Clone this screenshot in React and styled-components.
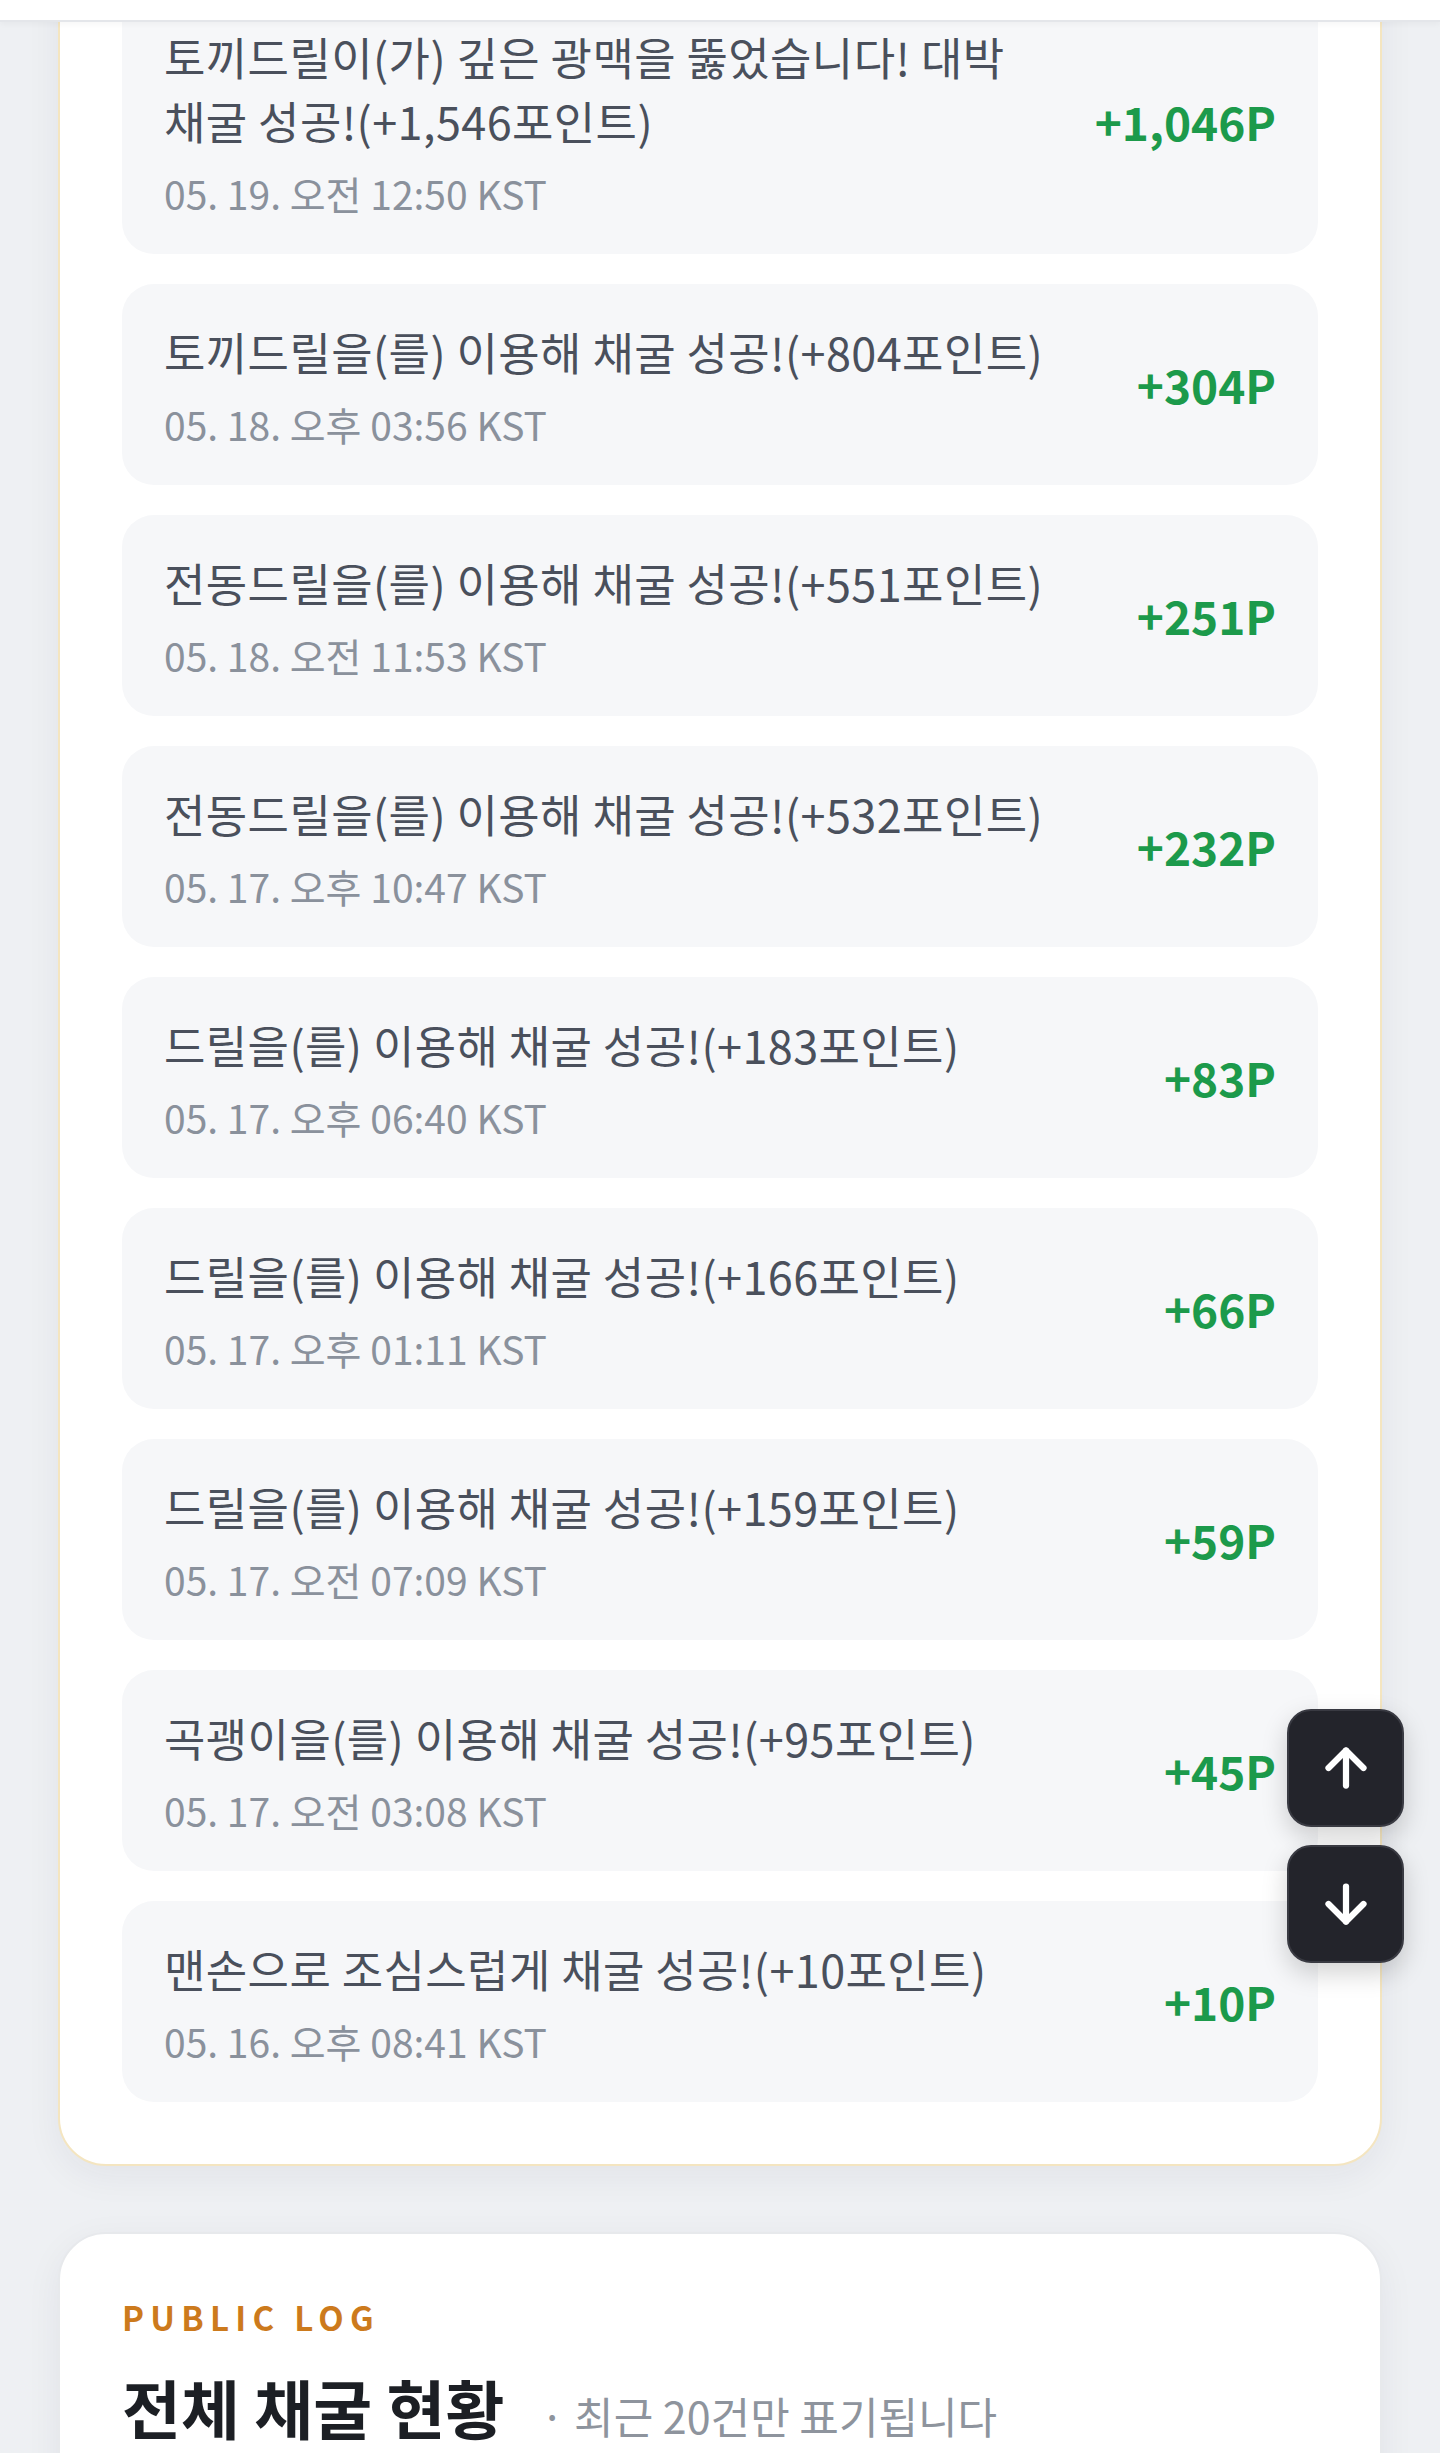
import React from "react";
import styled, { createGlobalStyle } from "styled-components";
import { ArrowUp, ArrowDown } from "lucide-react";

const GlobalStyle = createGlobalStyle`
  html, body {
    margin: 0;
    padding: 0;
    background: #eef0f3;
  }
  body {
    font-family: "Noto Sans CJK KR", "Noto Sans", sans-serif;
    color: #1f2329;
  }
  * {
    box-sizing: border-box;
  }
`;

const TopBar = styled.header`
  position: fixed;
  top: 0;
  left: 0;
  right: 0;
  height: 22px;
  background: #ffffff;
  border-bottom: 2px solid #e4e6ea;
  box-shadow: 0 2px 6px rgba(0, 0, 0, 0.04);
  z-index: 10;
`;

const Page = styled.main`
  padding: 0 58px 80px;
  min-height: 2453px;
`;

const Card = styled.section`
  background: #ffffff;
  border: 2px solid ${(p) => (p.$accent ? "#f4e5c0" : "#e7e9ec")};
  border-radius: 48px;
  padding: 62px;
  box-shadow: 0 10px 36px rgba(30, 40, 60, 0.06);
  margin-top: ${(p) => p.$offset || "0px"};
`;

const List = styled.ul`
  list-style: none;
  margin: 0;
  padding: 0;
  display: flex;
  flex-direction: column;
  gap: 30px;
`;

const Row = styled.li`
  display: flex;
  align-items: center;
  gap: 28px;
  background: #f6f7f9;
  border-radius: 32px;
  padding: 36px 42px 37px 42px;
`;

const Info = styled.div`
  flex: 1;
  min-width: 0;
`;

const Message = styled.div`
  font-size: 45px;
  line-height: 64px;
  letter-spacing: 0.4px;
  color: #4a505c;
  word-break: keep-all;
`;

const Time = styled.div`
  margin-top: 16px;
  font-size: 39px;
  line-height: 48px;
  color: #8a919c;
`;

const Amount = styled.div`
  flex-shrink: 0;
  font-size: 46px;
  font-weight: 700;
  color: #1c9a4b;
  white-space: nowrap;
`;

const Floating = styled.div`
  position: fixed;
  top: 1709px;
  right: 36px;
  display: flex;
  flex-direction: column;
  gap: 18px;
  z-index: 20;
`;

const FloatButton = styled.button`
  width: 117px;
  height: 118px;
  border-radius: 24px;
  border: 2px solid #393a42;
  background: #23242b;
  color: #ffffff;
  display: flex;
  align-items: center;
  justify-content: center;
  padding: 0;
  box-shadow: 0 10px 26px rgba(0, 0, 0, 0.18);
  cursor: pointer;
`;

const Eyebrow = styled.div`
  font-size: 33px;
  line-height: 46px;
  font-weight: 700;
  letter-spacing: 0.19em;
  color: #cc7a1c;
`;

const TitleRow = styled.div`
  display: flex;
  align-items: baseline;
  gap: 36px;
  margin-top: 28px;
`;

const Title = styled.h2`
  margin: 0;
  font-size: 64px;
  line-height: 76px;
  font-weight: 700;
  color: #1c1f24;
`;

const Note = styled.span`
  font-size: 43px;
  color: #8e949d;
`;

const PublicCard = styled(Card)`
  min-height: 420px;
  padding-top: 60px;
`;

const logs = [
  {
    msg: "토끼드릴이(가) 깊은 광맥을 뚫었습니다! 대박 채굴 성공!(+1,546포인트)",
    time: "05. 19. 오전 12:50 KST",
    amount: "+1,046P",
  },
  {
    msg: "토끼드릴을(를) 이용해 채굴 성공!(+804포인트)",
    time: "05. 18. 오후 03:56 KST",
    amount: "+304P",
  },
  {
    msg: "전동드릴을(를) 이용해 채굴 성공!(+551포인트)",
    time: "05. 18. 오전 11:53 KST",
    amount: "+251P",
  },
  {
    msg: "전동드릴을(를) 이용해 채굴 성공!(+532포인트)",
    time: "05. 17. 오후 10:47 KST",
    amount: "+232P",
  },
  {
    msg: "드릴을(를) 이용해 채굴 성공!(+183포인트)",
    time: "05. 17. 오후 06:40 KST",
    amount: "+83P",
  },
  {
    msg: "드릴을(를) 이용해 채굴 성공!(+166포인트)",
    time: "05. 17. 오후 01:11 KST",
    amount: "+66P",
  },
  {
    msg: "드릴을(를) 이용해 채굴 성공!(+159포인트)",
    time: "05. 17. 오전 07:09 KST",
    amount: "+59P",
  },
  {
    msg: "곡괭이을(를) 이용해 채굴 성공!(+95포인트)",
    time: "05. 17. 오전 03:08 KST",
    amount: "+45P",
  },
  {
    msg: "맨손으로 조심스럽게 채굴 성공!(+10포인트)",
    time: "05. 16. 오후 08:41 KST",
    amount: "+10P",
  },
];

function App() {
  return (
    <>
      <GlobalStyle />
      <TopBar />
      <Page>
        <Card $accent $offset="-75px">
          <List>
            {logs.map((log) => (
              <Row key={log.time}>
                <Info>
                  <Message>{log.msg}</Message>
                  <Time>{log.time}</Time>
                </Info>
                <Amount>{log.amount}</Amount>
              </Row>
            ))}
          </List>
        </Card>
        <PublicCard $offset="66px">
          <Eyebrow>PUBLIC LOG</Eyebrow>
          <TitleRow>
            <Title>전체 채굴 현황</Title>
            <Note>· 최근 20건만 표기됩니다</Note>
          </TitleRow>
        </PublicCard>
      </Page>
      <Floating>
        <FloatButton aria-label="위로">
          <ArrowUp size={60} strokeWidth={2.5} />
        </FloatButton>
        <FloatButton aria-label="아래로">
          <ArrowDown size={60} strokeWidth={2.5} />
        </FloatButton>
      </Floating>
    </>
  );
}

export default App;
